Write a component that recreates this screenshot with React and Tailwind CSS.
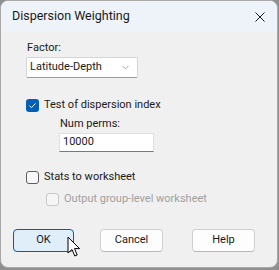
import { ChevronDown } from "lucide-react";

function Check({ checked, disabled }) {
  if (checked) {
    return (
      <span className="w-[13px] h-[13px] rounded-[3px] bg-[#005fb8] flex items-center justify-center">
        <svg width="9" height="9" viewBox="0 0 9 9">
          <path d="M1.5 4.8 L3.5 6.6 L7.5 2.4" fill="none" stroke="#fff" strokeWidth="1" />
        </svg>
      </span>
    );
  }
  return (
    <span
      className={`w-[13px] h-[13px] rounded-[3px] border ${
        disabled ? "border-[#c8c8c8] bg-[#f5f5f5]" : "border-[#5d5d5d] bg-[#f7f7f7]"
      }`}
    />
  );
}

function Btn({ children, primary }) {
  return (
    <div
      className={`h-[23px] rounded-[4px] border flex items-center justify-center text-[#1a1a1a] ${
        primary
          ? "w-[61px] border-[#005fb8] bg-[#e0eef9]"
          : "w-[63px] border-[#d0d0d0] border-b-[#b9b9b9] bg-[#fdfdfd]"
      }`}
    >
      {children}
    </div>
  );
}

export default function App() {
  return (
    <div className="w-[279px] h-[270px] bg-[#8f8f8f] font-['Roboto',sans-serif] text-[#1a1a1a]">
      <div className="relative w-[278px] h-[268px] rounded-[8px] border border-[#a8a8a8] overflow-hidden flex flex-col bg-[#f0f0f0]">
        <div className="h-[31px] bg-[#eef3f9] flex items-center justify-between pl-[11px] pr-[12px]">
          <span className="text-[12.5px] leading-none">Dispersion Weighting</span>
          <svg width="10" height="10" viewBox="0 0 10 10">
            <path d="M0.5 0.5 L9.5 9.5 M9.5 0.5 L0.5 9.5" stroke="#1a1a1a" strokeWidth="1" />
          </svg>
        </div>

        <div className="flex-1 pl-[25px] pt-[8px] text-[11px]">
          <div className="leading-[16px] pl-[1px]">Factor:</div>
          <div className="mt-[1px] w-[112px] h-[21px] bg-white border border-[#d6d6d6] border-b-[#9a9a9a] rounded-[2px] flex items-center justify-between pl-[3px] pr-[6px]">
            <span>Latitude-Depth</span>
            <ChevronDown size={11} strokeWidth={1.1} className="text-[#555]" />
          </div>

          <div className="mt-[21px] flex items-center gap-[5px] h-[13px]">
            <Check checked />
            <span>Test of dispersion index</span>
          </div>
          <div className="pl-[34px] mt-[4px] leading-[16px]">Num perms:</div>
          <div className="ml-[33px] mt-[1px] w-[95px] h-[19px] bg-white border border-[#e0e0e0] border-b-[#7a7a7a] flex items-center pl-[3px]">
            10000
          </div>

          <div className="mt-[19px] flex items-center gap-[5px] h-[13px]">
            <Check />
            <span>Stats to worksheet</span>
          </div>
          <div className="mt-[9px] ml-[20px] flex items-center gap-[5px] h-[13px] text-[#a0a0a0]">
            <Check disabled />
            <span>Output group-level worksheet</span>
          </div>

          <div className="mt-[23px] -ml-[13px] flex gap-[26px]">
            <Btn primary>OK</Btn>
            <div className="flex gap-[29px]">
              <Btn>Cancel</Btn>
              <Btn>Help</Btn>
            </div>
          </div>
        </div>

        <svg
          className="absolute left-[66px] top-[235px]"
          width="14"
          height="22"
          viewBox="0 0 14 22"
        >
          <path
            d="M1 1 L1 17 L5 13.5 L7.8 20 L10.2 19 L7.5 12.6 L12.6 12.6 Z"
            fill="#fff"
            stroke="#000"
            strokeWidth="1"
            strokeLinejoin="round"
          />
        </svg>
      </div>
    </div>
  );
}
